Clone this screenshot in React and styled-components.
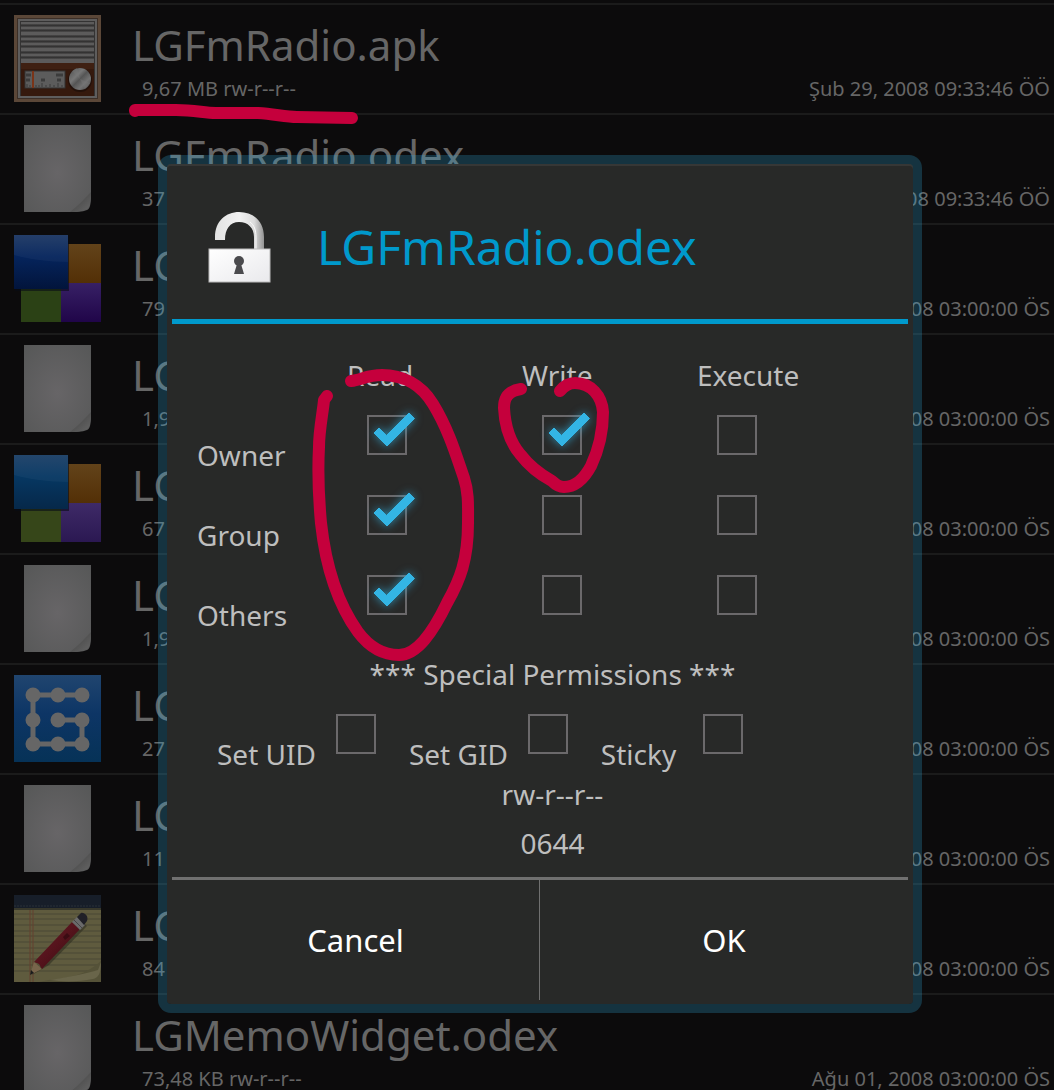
import React, { useState } from "react";
import styled, { createGlobalStyle } from "styled-components";

const files = [
  {
    icon: "radio",
    name: "LGFmRadio.apk",
    info: "9,67 MB rw-r--r--",
    date: "Şub 29, 2008 09:33:46 ÖÖ",
  },
  {
    icon: "page",
    name: "LGFmRadio.odex",
    info: "37",
    date: "Şub 29, 2008 09:33:46 ÖÖ",
  },
  { icon: "tiles", name: "LG", info: "79", date: "Ağu 01, 2008 03:00:00 ÖS" },
  { icon: "page", name: "LG", info: "1,9", date: "Ağu 01, 2008 03:00:00 ÖS" },
  {
    icon: "tilesLight",
    name: "LG",
    info: "67",
    date: "Ağu 01, 2008 03:00:00 ÖS",
  },
  { icon: "page", name: "LG", info: "1,9", date: "Ağu 01, 2008 03:00:00 ÖS" },
  { icon: "pattern", name: "LG", info: "27", date: "Ağu 01, 2008 03:00:00 ÖS" },
  { icon: "page", name: "LG", info: "11", date: "Ağu 01, 2008 03:00:00 ÖS" },
  { icon: "memo", name: "LG", info: "84", date: "Ağu 01, 2008 03:00:00 ÖS" },
  {
    icon: "page",
    name: "LGMemoWidget.odex",
    info: "73,48 KB rw-r--r--",
    date: "Ağu 01, 2008 03:00:00 ÖS",
  },
];

const columns = ["Read", "Write", "Execute"];
const owners = ["Owner", "Group", "Others"];
const specials = ["Set UID", "Set GID", "Sticky"];

const RadioIcon = () => (
  <FileIcon viewBox="0 0 88 88" aria-hidden="true">
    <defs>
      <linearGradient id="dial" x1="0" y1="0" x2="1" y2="1">
        <stop offset="0" stopColor="#4c4c4c" />
        <stop offset="0.35" stopColor="#777" />
        <stop offset="0.5" stopColor="#555" />
        <stop offset="0.7" stopColor="#737373" />
        <stop offset="1" stopColor="#444" />
      </linearGradient>
      <linearGradient id="slat" x1="0" y1="0" x2="0" y2="1">
        <stop offset="0" stopColor="#4a4949" />
        <stop offset="0.6" stopColor="#2f2e2e" />
        <stop offset="1" stopColor="#545353" />
      </linearGradient>
    </defs>
    <rect width="87" height="87" fill="#5b4738" />
    <rect x="3" y="3" width="81" height="81" fill="#3c2f27" />
    <rect x="4" y="4" width="79" height="79" fill="#5e5d5d" />
    <rect x="6" y="6" width="75" height="75" fill="#343333" />
    <rect x="7" y="7" width="73" height="41" fill="#5c5b5b" />
    {[9, 14, 20, 25, 30, 36, 41].map((y) => (
      <rect key={y} x="7" y={y} width="73" height="3" fill="url(#slat)" />
    ))}
    <rect x="7" y="48" width="73" height="33" fill="#35190d" />
    <rect x="7" y="48" width="73" height="6" fill="#3f2012" />
    <rect
      x="11"
      y="56"
      width="40"
      height="17"
      fill="#5c5c5c"
      stroke="#333"
      strokeWidth="1"
    />
    <rect x="18" y="56" width="2" height="17" fill="#7a3418" />
    <path
      d="M12 60H17M42 60H49M12 65H16M27 65H31M43 65H47"
      stroke="#3c3c3c"
      strokeWidth="3"
    />
    <path
      d="M13 72V69M16 72V70M22 72V70M25 72V70M28 72V68M32 72V70M36 72V69M40 72V70M44 72V68M48 72V70"
      stroke="#3a3a3a"
      strokeWidth="1"
    />
    <circle cx="66" cy="65" r="12" fill="#23110a" />
    <circle cx="66" cy="64" r="11" fill="url(#dial)" />
    <path d="M66 64L58 56L63 53ZM66 64L76 68L71 74Z" fill="#777" opacity=".4" />
  </FileIcon>
);

const PageIcon = () => (
  <FileIcon viewBox="0 0 88 88" aria-hidden="true">
    <defs>
      <radialGradient id="paper" cx="0.5" cy="0.55" r="0.75">
        <stop offset="0" stopColor="#676567" />
        <stop offset="1" stopColor="#565757" />
      </radialGradient>
      <linearGradient id="curl" x1="0" y1="0" x2="1" y2="1">
        <stop offset="0" stopColor="#5c5b5c" />
        <stop offset="0.5" stopColor="#525252" />
        <stop offset="1" stopColor="#666" />
      </linearGradient>
    </defs>
    <path d="M10 0H77V70C77 79 76 84 73 85C68 87 62 87 56 87H10Z" fill="url(#paper)" />
    <path d="M77 67C70 74 64 81 56 87C66 87 72 85 74 83C76 80 77 75 77 67Z" fill="url(#curl)" />
  </FileIcon>
);

const TilesIcon = ({ light }) => (
  <FileIcon viewBox="0 0 88 88" aria-hidden="true">
    <defs>
      <linearGradient id={light ? "blueB" : "blueA"} x1="0" y1="0" x2="0" y2="1">
        <stop offset="0" stopColor={light ? "#1b3f66" : "#1c3763"} />
        <stop offset="0.4" stopColor={light ? "#063762" : "#05245c"} />
        <stop offset="1" stopColor={light ? "#062849" : "#02143b"} />
      </linearGradient>
      <linearGradient id={light ? "violetB" : "violetA"} x1="0" y1="0" x2="0" y2="1">
        <stop offset="0" stopColor={light ? "#3e2a67" : "#372065"} />
        <stop offset="1" stopColor={light ? "#2b1852" : "#200549"} />
      </linearGradient>
      <linearGradient id="orange" x1="0" y1="0" x2="0" y2="1">
        <stop offset="0" stopColor="#62431a" />
        <stop offset="1" stopColor="#532f06" />
      </linearGradient>
    </defs>
    <rect x="52" y="9" width="35" height="39" fill="url(#orange)" />
    <rect x="7" y="52" width="41" height="35" fill={light ? "#364619" : "#2b4115"} />
    <rect
      x="47"
      y="48"
      width="40"
      height="39"
      fill={light ? "url(#violetB)" : "url(#violetA)"}
    />
    <rect x="1" y="2" width="54" height="54" fill="#080b16" opacity=".6" />
    <rect width="54" height="54" fill={light ? "url(#blueB)" : "url(#blueA)"} />
    <path d="M0 0H54V27C34 27 14 24 0 20Z" fill="#fff" opacity=".04" />
  </FileIcon>
);

const PatternIcon = () => (
  <FileIcon viewBox="0 0 88 88" aria-hidden="true">
    <defs>
      <linearGradient id="sky" x1="0" y1="0" x2="0" y2="1">
        <stop offset="0" stopColor="#20456f" />
        <stop offset="0.45" stopColor="#0d3565" />
        <stop offset="1" stopColor="#063257" />
      </linearGradient>
    </defs>
    <rect width="87" height="87" fill="url(#sky)" />
    <path
      d="M68 20H19V69H68V45H44"
      fill="none"
      stroke="#666"
      strokeWidth="5"
    />
    {[
      [19, 20],
      [44, 20],
      [68, 20],
      [19, 45],
      [44, 45],
      [68, 45],
      [19, 69],
      [44, 69],
      [68, 69],
    ].map(([x, y]) => (
      <circle key={`${x}-${y}`} cx={x} cy={y} r="7.5" fill="#666" />
    ))}
  </FileIcon>
);

const MemoIcon = () => (
  <FileIcon viewBox="0 0 88 88" aria-hidden="true">
    <defs>
      <linearGradient id="pencil" x1="0" y1="0" x2="1" y2="1">
        <stop offset="0" stopColor="#642027" />
        <stop offset="0.5" stopColor="#55131c" />
        <stop offset="1" stopColor="#300a10" />
      </linearGradient>
    </defs>
    <rect width="87" height="87" fill="#5f5b3e" />
    {[19, 24, 30, 36, 41, 47, 53, 58, 64, 70, 76].map((y) => (
      <path key={y} d={`M0 ${y}H87`} stroke="#4b4934" strokeWidth="1" />
    ))}
    <path d="M16 14V87M19 14V87" stroke="#65402f" strokeWidth="1" />
    <rect width="87" height="13" fill="#171e29" />
    <path d="M0 11H87" stroke="#2a3039" strokeDasharray="2 1" />
    <path d="M0 14H87" stroke="#38382b" strokeWidth="2" />
    <path d="M35 85C55 83 72 80 87 66V87H25Z" fill="#555238" />
    <path d="M36 85C57 82 73 78 84 75L87 67C87 79 84 83 79 84C65 87 48 87 36 85Z" fill="#69654a" />
    <path d="M18 80L35 70L73 31L68 27Z" fill="#25251a" opacity=".5" />
    <path d="M16 80L20 67L28 74Z" fill="#78654b" />
    <path d="M16 80L17 75L20 78Z" fill="#191a1b" />
    <path d="M20 67L58 27L66 34L28 74L25 69Z" fill="url(#pencil)" />
    <path d="M58 27L63 22L71 30L66 35Z" fill="#6a6a6a" />
    <path d="M60 25L68 33" stroke="#444" strokeWidth="1" />
    <path d="M63 22L67 18C70 17 75 21 73 26L70 30Z" fill="#202027" />
    <path d="M49 42L53 38L56 41L51 45Z" fill="#3b0c13" />
  </FileIcon>
);

const icons = {
  radio: <RadioIcon />,
  page: <PageIcon />,
  tiles: <TilesIcon />,
  tilesLight: <TilesIcon light />,
  pattern: <PatternIcon />,
  memo: <MemoIcon />,
};

const LockIcon = () => (
  <LockSvg viewBox="0 0 64 72" aria-hidden="true">
    <defs>
      <linearGradient id="shackle" x1="0" y1="0" x2="1" y2="0">
        <stop offset="0" stopColor="#e2e2e2" />
        <stop offset="0.5" stopColor="#f2f2f2" />
        <stop offset="0.8" stopColor="#dcdcdc" />
        <stop offset="1" stopColor="#939393" />
      </linearGradient>
      <linearGradient id="body" x1="0" y1="0" x2="1" y2="1">
        <stop offset="0" stopColor="#fff" />
        <stop offset="1" stopColor="#e9e9ec" />
      </linearGradient>
    </defs>
    <path
      d="M7 29V26C7 10 18 1 31 1C46 1 56 11 56 26V40H46V26C46 17 40 11 31 11C22 11 17 18 17 29Z"
      fill="url(#shackle)"
    />
    <path d="M48 39V26C48 19 46 14 42 11" fill="none" stroke="#fafafa" />
    <rect x="1" y="38" width="61" height="33" fill="url(#body)" stroke="#bbb" />
    <circle cx="31" cy="50" r="5" fill="#4a4a4d" />
    <path d="M29 53H33L36 63H26Z" fill="#4a4a4d" />
  </LockSvg>
);

const CheckBox = ({ label, id, checked, onToggle }) => (
  <CheckArea>
    <CheckInput
      type="checkbox"
      id={id}
      aria-label={label}
      checked={checked}
      onChange={onToggle}
    />
    {checked && (
      <CheckMark viewBox="0 0 80 80" aria-hidden="true">
        <path
          d="M27 38L32 33L39.5 40.5L62 18L67.5 23.5L40 51Z"
          fill="#33b5e5"
          stroke="#33b5e5"
        />
      </CheckMark>
    )}
  </CheckArea>
);

const App = () => {
  const [checked, setChecked] = useState([
    "Owner Read",
    "Owner Write",
    "Group Read",
    "Others Read",
  ]);
  const toggle = (key) => {
    setChecked(
      checked.includes(key)
        ? checked.filter((item) => item !== key)
        : [...checked, key]
    );
  };
  return (
    <Screen>
      <GlobalStyle />
      <FileList>
        {files.map((file, index) => (
          <FileRow key={index}>
            {icons[file.icon]}
            <FileText>
              <FileName>{file.name}</FileName>
              <FileMeta>
                <span>{file.info}</span>
                <span>{file.date}</span>
              </FileMeta>
            </FileText>
          </FileRow>
        ))}
      </FileList>
      <Overlay>
        <Dialog role="dialog" aria-labelledby="dialog-title">
          <DialogHeader>
            <LockIcon />
            <DialogTitle id="dialog-title">LGFmRadio.odex</DialogTitle>
          </DialogHeader>
          <DialogBody>
            <Permissions>
              <thead>
                <tr>
                  <LabelCell as="td" />
                  {columns.map((column) => (
                    <ColumnHead key={column} scope="col">
                      {column}
                    </ColumnHead>
                  ))}
                </tr>
              </thead>
              <tbody>
                {owners.map((owner) => (
                  <tr key={owner}>
                    <LabelCell scope="row">{owner}</LabelCell>
                    {columns.map((column) => (
                      <BoxCell key={column}>
                        <CheckBox
                          label={`${owner} ${column}`}
                          checked={checked.includes(`${owner} ${column}`)}
                          onToggle={() => toggle(`${owner} ${column}`)}
                        />
                      </BoxCell>
                    ))}
                  </tr>
                ))}
              </tbody>
            </Permissions>
            <CenterLine $top={19}>*** Special Permissions ***</CenterLine>
            <SpecialRow>
              {specials.map((special) => (
                <SpecialItem key={special}>
                  <SpecialLabel htmlFor={special}>{special}</SpecialLabel>
                  <CheckBox
                    id={special}
                    checked={checked.includes(special)}
                    onToggle={() => toggle(special)}
                  />
                </SpecialItem>
              ))}
            </SpecialRow>
            <CenterLine>rw-r--r--</CenterLine>
            <CenterLine $top={9}>0644</CenterLine>
          </DialogBody>
          <DialogButtons>
            <DialogButton type="button">Cancel</DialogButton>
            <DialogButton type="button">OK</DialogButton>
          </DialogButtons>
        </Dialog>
      </Overlay>
      <Marker viewBox="0 0 1054 1090" aria-hidden="true">
        <path d="M135 111V110H176C195 110 204 113 216 113H258C275 114 285 117 297 117L352 118" />
        <path d="M351 381C361 380 367 375 382 375C402 375 421 384 433 404C449 430 457 458 464 478C469 493 468 508 468 523C468 560 460 580 447 603C433 632 417 655 399 655C384 655 370 648 358 632C335 600 325 560 321 523C318 490 318 465 319 447C319 430 323 412 324 400L327 396" />
        <path d="M521 389C508 391 504 398 504 408C505 428 510 442 520 454C530 467 541 475 552 481C556 485 560 487 564 487C576 487 584 479 591 466C600 447 603 430 603 412C602 396 591 383 575 383C568 383 564 386 560 391" />
      </Marker>
    </Screen>
  );
};

const GlobalStyle = createGlobalStyle`
  * {
    box-sizing: border-box;
  }
  body {
    margin: 0;
    background: #0c0b0c;
    font-family: "Noto Sans", "Open Sans", sans-serif;
  }
`;

const Screen = styled.div`
  position: relative;
  height: 100vh;
  overflow: hidden;
  background: #0c0b0c;
`;

const FileList = styled.ul`
  list-style: none;
  margin: 0;
  padding: 3px 0 0;
  color: #666;
`;

const FileRow = styled.li`
  display: flex;
  gap: 30px;
  height: 110px;
  padding: 10px 4px 0 14px;
  border-top: 2px solid #1b1b1b;
`;

const FileIcon = styled.svg`
  flex: none;
  width: 88px;
  height: 88px;
`;

const FileText = styled.div`
  flex: 1;
  padding-top: 5px;
`;

const FileName = styled.div`
  font-size: 42px;
  line-height: 50px;
`;

const FileMeta = styled.div`
  display: flex;
  justify-content: space-between;
  margin-top: 8px;
  padding-left: 10px;
  font-size: 20px;
  line-height: 22px;
`;

const Overlay = styled.div`
  position: absolute;
  inset: 0;
  padding: 155px 132px 0 158px;
`;

const Dialog = styled.section`
  padding: 0 5px 4px;
  border: 9px solid rgba(51, 181, 229, 0.24);
  border-radius: 13px;
  background: #282928;
  background-clip: padding-box;
  box-shadow: inset 0 2px 0 #363736;
  color: #bebebe;
`;

const DialogHeader = styled.header`
  display: flex;
  align-items: center;
  gap: 45px;
  height: 160px;
  padding: 10px 36px 0;
  border-bottom: 5px solid #0099cc;
`;

const LockSvg = styled.svg`
  flex: none;
  width: 64px;
  height: 72px;
`;

const DialogTitle = styled.h1`
  margin: 0;
  font-size: 48px;
  font-weight: 400;
  line-height: 60px;
  color: #0099cc;
`;

const DialogBody = styled.div`
  padding: 31px 0 14px 25px;
  font-size: 28px;
  line-height: 40px;
`;

const Permissions = styled.table`
  border-collapse: collapse;
  table-layout: fixed;
`;

const LabelCell = styled.th`
  width: 150px;
  padding: 0;
  font-weight: 400;
  text-align: left;
  vertical-align: bottom;
`;

const ColumnHead = styled.th`
  width: 175px;
  padding: 0;
  font-weight: 400;
  text-align: left;
`;

const BoxCell = styled.td`
  padding: 0;
`;

const CheckArea = styled.span`
  position: relative;
  display: block;
  width: 80px;
  height: 80px;
  padding: 20px;
`;

const CheckInput = styled.input`
  display: block;
  appearance: none;
  width: 40px;
  height: 40px;
  margin: 0;
  border: 2px solid #6b696b;
`;

const CheckMark = styled.svg`
  position: absolute;
  inset: 0;
  overflow: visible;
  filter: drop-shadow(0 0 5px rgba(51, 181, 229, 0.7));
  pointer-events: none;
`;

const CenterLine = styled.div`
  margin-top: ${(props) => props.$top || 0}px;
  text-align: center;
`;

const SpecialRow = styled.div`
  display: flex;
  gap: 13px;
  padding-left: 20px;
`;

const SpecialItem = styled.div`
  display: flex;
  align-items: flex-end;
`;

const SpecialLabel = styled.label`
  min-width: 82px;
  white-space: nowrap;
`;

const DialogButtons = styled.footer`
  display: grid;
  grid-template-columns: 1fr 1fr;
  border-top: 3px solid #707070;
`;

const DialogButton = styled.button`
  height: 120px;
  padding: 0;
  border: 0;
  background: none;
  color: #fff;
  font-family: inherit;
  font-size: 31px;
  &:first-child {
    border-right: 1px solid #707070;
  }
`;

const Marker = styled.svg`
  position: absolute;
  top: 0;
  left: 0;
  width: 1054px;
  height: 1090px;
  fill: none;
  stroke: #c5003c;
  stroke-width: 12;
  stroke-linecap: round;
  stroke-linejoin: round;
  pointer-events: none;
`;

export default App;
